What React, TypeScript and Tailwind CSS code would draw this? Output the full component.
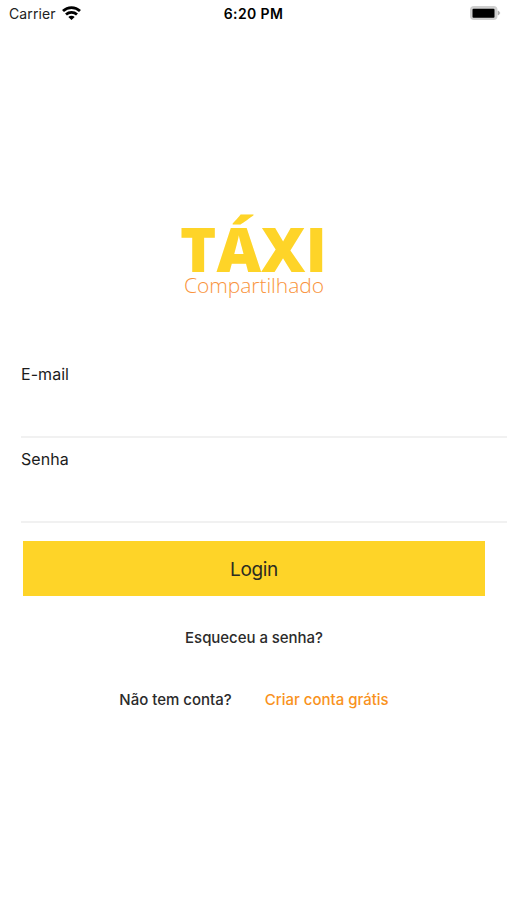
function StatusBar() {
  return (
    <header className="grid h-7 grid-cols-3 items-center pl-[9px] pr-[6px] text-[14px] text-[#222]">
      <div className="flex items-center gap-[6px]">
        <span className="-mt-[2px] tracking-[0.1px]">Carrier</span>
        <svg className="-mt-[2px] h-[14px] w-[19px]" viewBox="0 0 19 14" aria-label="Wi-Fi">
          <g fill="none" stroke="#000" strokeWidth="2.8">
            <path d="M1 5.1C5.8.5 13.2.5 18 5.1" />
            <path d="M4 8.5c3.1-2.8 7.9-2.8 11 0" />
          </g>
          <path d="M6.3 10.9c1.9-1.6 4.5-1.6 6.4 0L9.5 14z" fill="#000" />
        </svg>
      </div>
      <span className="-ml-[3px] -mt-px text-center font-semibold tracking-[0.38px] text-black">6:20 PM</span>
      <svg className="-mt-[2px] h-4 w-8 justify-self-end" viewBox="0 0 32 16" aria-label="Battery">
        <rect x="1" y="1" width="27.5" height="14" rx="4" fill="#cfcfcf" />
        <rect x="3.5" y="3.7" width="22" height="9" rx="1" fill="#000" />
        <path d="M29 6c2.3.8 2.3 3.200 0 4z" fill="#aaa" stroke="#aaa" strokeWidth=".5" />
      </svg>
    </header>
  );
}

function Logo() {
  return (
    <h1 className="mt-[195px] flex flex-col items-center font-['Open_Sans',sans-serif]">
      <span className="text-[61.5px] font-extrabold leading-[50px] text-[#fed428]">TÁXI</span>
      <span className="ml-px text-[21px] font-[340] leading-[24px] tracking-[-0.05px] text-[#f9943c]">Compartilhado</span>
    </h1>
  );
}

function Field({ label, type }: { label: string; type: string }) {
  return (
    <label className="ml-[21px] flex h-[85px] flex-col border-b-2 border-[#f1f1f1] pt-[9px] text-[16px] leading-6 text-[#1c1c1c]">
      <span className="tracking-[0.05px]">{label}</span>
      <input type={type} className="w-full flex-1 outline-none" />
    </label>
  );
}

export default function App() {
  return (
    <main className="flex h-[900px] w-full flex-col overflow-hidden bg-white font-['Inter',sans-serif]">
      <StatusBar />
      <Logo />
      <form className="mt-[56px] flex flex-col">
        <Field label="E-mail" type="email" />
        <Field label="Senha" type="password" />
        <button
          type="button"
          className="ml-[23px] mr-[22px] mt-[18px] h-[55px] bg-[#fed428] pt-[3px] text-[19px] tracking-[-0.35px] text-[#2c2c22]"
        >
          Login
        </button>
      </form>
      <a className="ml-px mt-[30px] text-center text-[15px] font-medium leading-6 tracking-[-0.05px] text-[#2b2b2b]">
        Esqueceu a senha?
      </a>
      <div className="ml-px mt-[38px] flex justify-center gap-[33px] text-[15px] font-medium leading-6">
        <span className="text-[#2b2b2b]">Não tem conta?</span>
        <a className="text-[#f9921c]">Criar conta grátis</a>
      </div>
    </main>
  );
}
